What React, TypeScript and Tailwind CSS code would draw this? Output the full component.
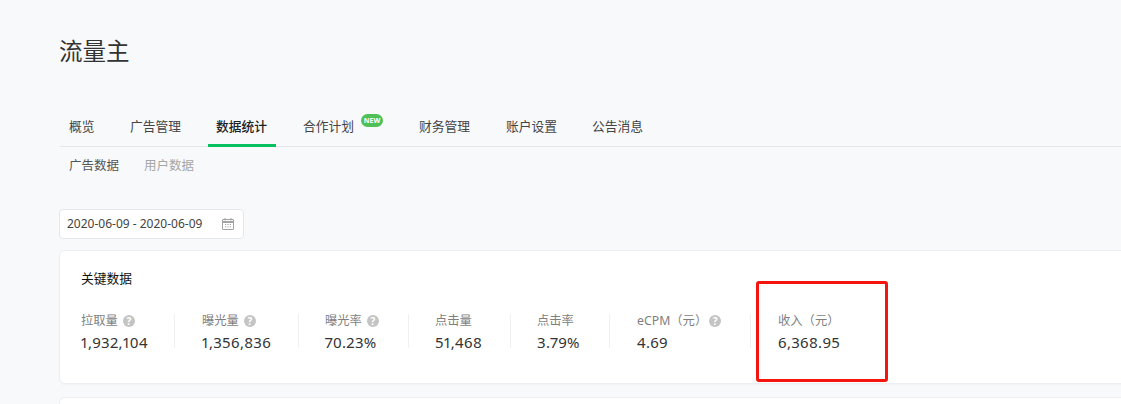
const TABS = [
  { label: '概览', cls: 'w-[41px] ml-[1px] mr-[20px]' },
  { label: '广告管理', cls: 'w-[68px] mr-[18px]' },
  { label: '数据统计', cls: 'w-[68px] mr-[19px]', active: true },
  { label: '合作计划', cls: 'w-[96px] mr-[20px]', badge: true },
  { label: '财务管理', cls: 'w-[68px] mr-[19px]' },
  { label: '账户设置', cls: 'w-[68px] mr-[18px]' },
  { label: '公告消息', cls: 'w-[68px]' },
];

const STATS = [
  { label: '拉取量', value: '1,932,104', help: true, cls: 'w-[94px]', helpCls: 'ml-[5px]' },
  { label: '曝光量', value: '1,356,836', help: true, cls: 'w-[124px] pl-[27px]', helpCls: 'ml-[5px]' },
  { label: '曝光率', value: '70.23%', help: true, cls: 'w-[110px] pl-[26px]', helpCls: 'ml-[5px]' },
  { label: '点击量', value: '51,468', cls: 'w-[102px] pl-[26px]' },
  { label: '点击率', value: '3.79%', cls: 'w-[99px] pl-[26px]' },
  { label: 'eCPM（元）', value: '4.69', help: true, cls: 'w-[141px] pl-[27px]', helpCls: 'ml-[2px]' },
  { label: '收入（元）', value: '6,368.95', cls: 'w-[130px] pl-[27px]', last: true },
];

function HelpIcon({ className }: { className?: string }) {
  return (
    <span className={`inline-flex h-[12px] w-[12px] items-center justify-center rounded-full bg-[#c4c4c4] text-[10px] font-bold leading-none text-white ${className ?? ''}`}>
      ?
    </span>
  );
}

function CalendarIcon() {
  return (
    <svg width="14" height="14" viewBox="0 0 14 14" fill="none" stroke="#a3a3a3" strokeWidth="1">
      <rect x="1.5" y="2.5" width="11" height="10" rx="0.5" />
      <path d="M1.5 4.5h11M1.5 5.5h11M4 1v2.5M10 1v2.5" />
      <path d="M4 7.5h1.2M6.4 7.5h1.2M8.8 7.5H10M4 9.8h1.2M6.4 9.8h1.2M8.8 9.8H10" />
    </svg>
  );
}

export default function App() {
  return (
    <div
      className="relative h-[404px] w-[1121px] overflow-hidden bg-[#f8f9fb] pl-[59px] text-[#333]"
      style={{ fontFamily: '"Noto Sans", "Noto Sans CJK SC", sans-serif' }}
    >
      <h1 className="pt-[34px] text-[23.5px] font-normal leading-[34px] text-[#333]">流量主</h1>

      <div className="ml-[1px] mt-[38px] flex h-[41px] border-b border-[#e4e6e9]">
        {TABS.map((t) => (
          <div
            key={t.label}
            className={`relative h-[41px] pl-[8px] pt-[10px] text-[12.75px] leading-[20px] ${t.cls} ${t.active ? 'border-b-[3px] border-[#07c160] font-medium text-[#222]' : 'text-[#444]'}`}
          >
            {t.label}
            {t.badge && (
              <span className="absolute left-[66px] top-[8px] flex h-[13px] w-[22px] items-center justify-center rounded-full bg-[#4fbf57] text-[7px] font-bold leading-none text-white">
                NEW
              </span>
            )}
          </div>
        ))}
      </div>

      <div className="mt-[9px] flex pl-[10px] text-[12.5px] leading-[20px]">
        <span className="w-[75px] text-[#555]">广告数据</span>
        <span className="text-[#a6a6a6]">用户数据</span>
      </div>

      <div className="mt-[33px] flex h-[30px] w-[185px] items-center justify-between rounded-[4px] border border-[#e6e7ea] bg-white pl-[7px] pr-[8px] text-[12px] text-[#444]">
        <span>2020-06-09 - 2020-06-09</span>
        <CalendarIcon />
      </div>

      <div className="mt-[11px] h-[134px] w-[1100px] rounded-[6px] border border-[#eceef1] bg-white pl-[21px] pt-[17px] shadow-[0_1px_2px_rgba(0,0,0,0.03)]">
        <div className="text-[12.75px] font-normal leading-[20px] text-[#111]">关键数据</div>
        <div className="mt-[26px] flex">
          {STATS.map((s) => (
            <div key={s.label} className={`${s.cls} h-[34px] shrink-0 ${s.last ? '' : 'border-r border-[#f0f0f0]'}`}>
              <div className="-mt-[1px] flex h-[16px] items-center text-[12.3px] leading-[16px] text-[#7f7f7f]">
                {s.label}
                {s.help && <HelpIcon className={s.helpCls} />}
              </div>
              <div className="mt-[3px] text-[15px] leading-[20px] tracking-[0.3px] text-[#333] proportional-nums">{s.value}</div>
            </div>
          ))}
        </div>
      </div>

      <div className="mt-[13px] h-[40px] w-[1100px] rounded-[6px] border border-[#eceef1] bg-white" />

      <div className="absolute left-[756px] top-[281px] h-[101px] w-[132px] rounded-[3px] border-[3px] border-[#f5150f]" />
    </div>
  );
}
